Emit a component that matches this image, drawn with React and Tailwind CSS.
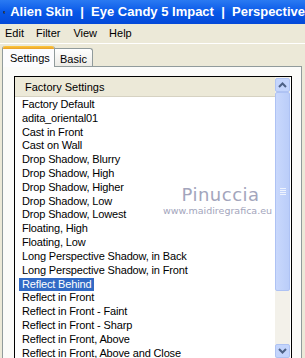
import React from 'react';

const items = [
  'Factory Default',
  'adita_oriental01',
  'Cast in Front',
  'Cast on Wall',
  'Drop Shadow, Blurry',
  'Drop Shadow, High',
  'Drop Shadow, Higher',
  'Drop Shadow, Low',
  'Drop Shadow, Lowest',
  'Floating, High',
  'Floating, Low',
  'Long Perspective Shadow, in Back',
  'Long Perspective Shadow, in Front',
  'Reflect Behind',
  'Reflect in Front',
  'Reflect in Front - Faint',
  'Reflect in Front - Sharp',
  'Reflect in Front, Above',
  'Reflect in Front, Above and Close',
];

const Chevron = ({ down }) => (
  <svg width="9" height="6" viewBox="0 0 9 6" className={down ? 'rotate-180' : ''}>
    <path d="M1 5 L4.5 1.5 L8 5" fill="none" stroke="#4D6185" strokeWidth="2" />
  </svg>
);

const AlienIcon = () => (
  <svg width="14" height="17" viewBox="0 0 14 17">
    <ellipse cx="7" cy="8" rx="6" ry="7.5" fill="#111" transform="rotate(-20 7 8)" />
    <path d="M5 7 C6 4.5 9 4.5 10 6.5 C9 6 7 6.5 6.5 8 Z" fill="#fff" />
    <ellipse cx="7.5" cy="9.5" rx="2" ry="1.5" fill="#ddd" />
  </svg>
);

export default function App() {
  return (
    <div className="relative w-[305px] h-[358px] overflow-hidden bg-[#ECE9D8] font-['Liberation_Sans',Arial,sans-serif] text-black">
      {/* title bar */}
      <div className="flex items-center h-[24px] pl-[3px] gap-[5px] bg-gradient-to-b from-[#2A7AF2] via-[#0858E8] to-[#0449D8] whitespace-nowrap">
        <AlienIcon />
        <span className="text-white font-bold text-[13px]">
          Alien Skin&nbsp;&nbsp;|&nbsp;&nbsp;Eye Candy 5 Impact&nbsp;&nbsp;|&nbsp;&nbsp;Perspective
        </span>
      </div>

      {/* menu bar */}
      <div className="flex items-center h-[20px] text-[11px] border-b border-white">
        <span className="ml-[5px]">Edit</span>
        <span className="ml-[12px]">Filter</span>
        <span className="ml-[13px]">View</span>
        <span className="ml-[12px]">Help</span>
      </div>

      {/* tabs */}
      <div className="flex items-end h-[22px] pl-[2px] text-[11px]">
        <div className="relative z-10 -mb-px w-[53px] h-[21px] bg-[#FCFCFE] border-x border-[#919B9C] rounded-t-[3px] overflow-hidden">
          <div className="h-[3px] bg-gradient-to-b from-[#FFC83C] to-[#E6A02C]" />
          <div className="pl-[7px] pt-[1px]">Settings</div>
        </div>
        <div className="w-[38px] h-[18px] border-t border-r border-[#919B9C] rounded-tr-[3px] bg-gradient-to-b from-white to-[#ECEBE6] pl-[5px] pt-[2px]">
          Basic
        </div>
      </div>

      {/* tab panel */}
      <div className="ml-[2px] w-[300px] h-[300px] bg-[#FBFBF9] border border-[#919B9C] pt-[9px] pl-[11px] pr-[9px]">
        <div className="flex h-[284px] bg-white border border-black text-[11px]">
          <div className="flex-1 flex flex-col">
            <div className="h-[20px] flex items-center pl-[10px] pt-px bg-[#ECE9D8] border-b border-[#D6D2C2]">
              Factory Settings
            </div>
            {items.map((t) => (
              <div key={t} className="h-[14px] flex items-center pl-[4px] pt-[2px] whitespace-nowrap leading-none tracking-[-0.15px]">
                {t === 'Reflect Behind' ? (
                  <span className="h-[13px] -mb-px flex items-center px-[3px] bg-[#316AC5] text-white">{t}</span>
                ) : (
                  <span className="px-[3px]">{t}</span>
                )}
              </div>
            ))}
          </div>
          {/* scrollbar */}
          <div className="w-[15px] mr-px pt-px flex flex-col bg-[#F3F1EA]">
            <div className="h-[14px] flex items-center justify-center bg-[#C4D5FC] border border-[#AFC3F3] rounded-[2px]">
              <Chevron />
            </div>
            <div className="h-[199px] flex flex-col items-center justify-center gap-[1px] bg-gradient-to-r from-[#C9D8FC] to-[#BACDF9] border border-[#AEC2F4] rounded-[2px]">
              <div className="w-[6px] h-px bg-[#EEF3FE]" />
              <div className="w-[6px] h-px bg-[#EEF3FE]" />
              <div className="w-[6px] h-px bg-[#EEF3FE]" />
              <div className="w-[6px] h-px bg-[#EEF3FE]" />
            </div>
            <div className="h-[53px]" />
            <div className="h-[14px] flex items-center justify-center bg-[#C4D5FC] border border-[#AFC3F3] rounded-[2px]">
              <Chevron down />
            </div>
          </div>
        </div>
      </div>

      {/* watermark */}
      <div className="absolute left-[163px] top-[185px] flex flex-col items-center text-[#A3A5BC] font-['DejaVu_Sans',sans-serif] pointer-events-none">
        <span className="text-[18px] leading-[20px] tracking-[0.5px] ml-[6px]">Pinuccia</span>
        <span className="text-[9.5px] leading-[12px]">www.maidiregrafica.eu</span>
      </div>
    </div>
  );
}
